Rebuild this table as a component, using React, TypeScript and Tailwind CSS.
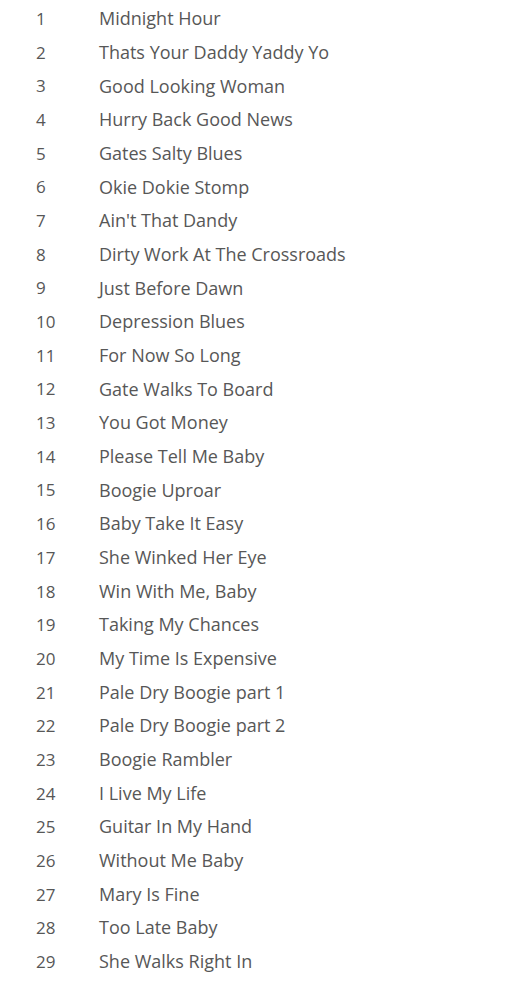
const tracks = [
  "Midnight Hour",
  "Thats Your Daddy Yaddy Yo",
  "Good Looking Woman",
  "Hurry Back Good News",
  "Gates Salty Blues",
  "Okie Dokie Stomp",
  "Ain't That Dandy",
  "Dirty Work At The Crossroads",
  "Just Before Dawn",
  "Depression Blues",
  "For Now So Long",
  "Gate Walks To Board",
  "You Got Money",
  "Please Tell Me Baby",
  "Boogie Uproar",
  "Baby Take It Easy",
  "She Winked Her Eye",
  "Win With Me, Baby",
  "Taking My Chances",
  "My Time Is Expensive",
  "Pale Dry Boogie part 1",
  "Pale Dry Boogie part 2",
  "Boogie Rambler",
  "I Live My Life",
  "Guitar In My Hand",
  "Without Me Baby",
  "Mary Is Fine",
  "Too Late Baby",
  "She Walks Right In",
];

export default function App() {
  return (
    <div className="w-[512px] h-[1000px] bg-white pt-[2px] text-[#575757] font-['Open_Sans',sans-serif] text-[18px]">
      {tracks.map((title, i) => (
        <div key={title} className="flex items-center h-[33.68px]">
          <span className="w-[99px] pl-[36px] text-[17px]">{i + 1}</span>
          <span>{title}</span>
        </div>
      ))}
    </div>
  );
}
